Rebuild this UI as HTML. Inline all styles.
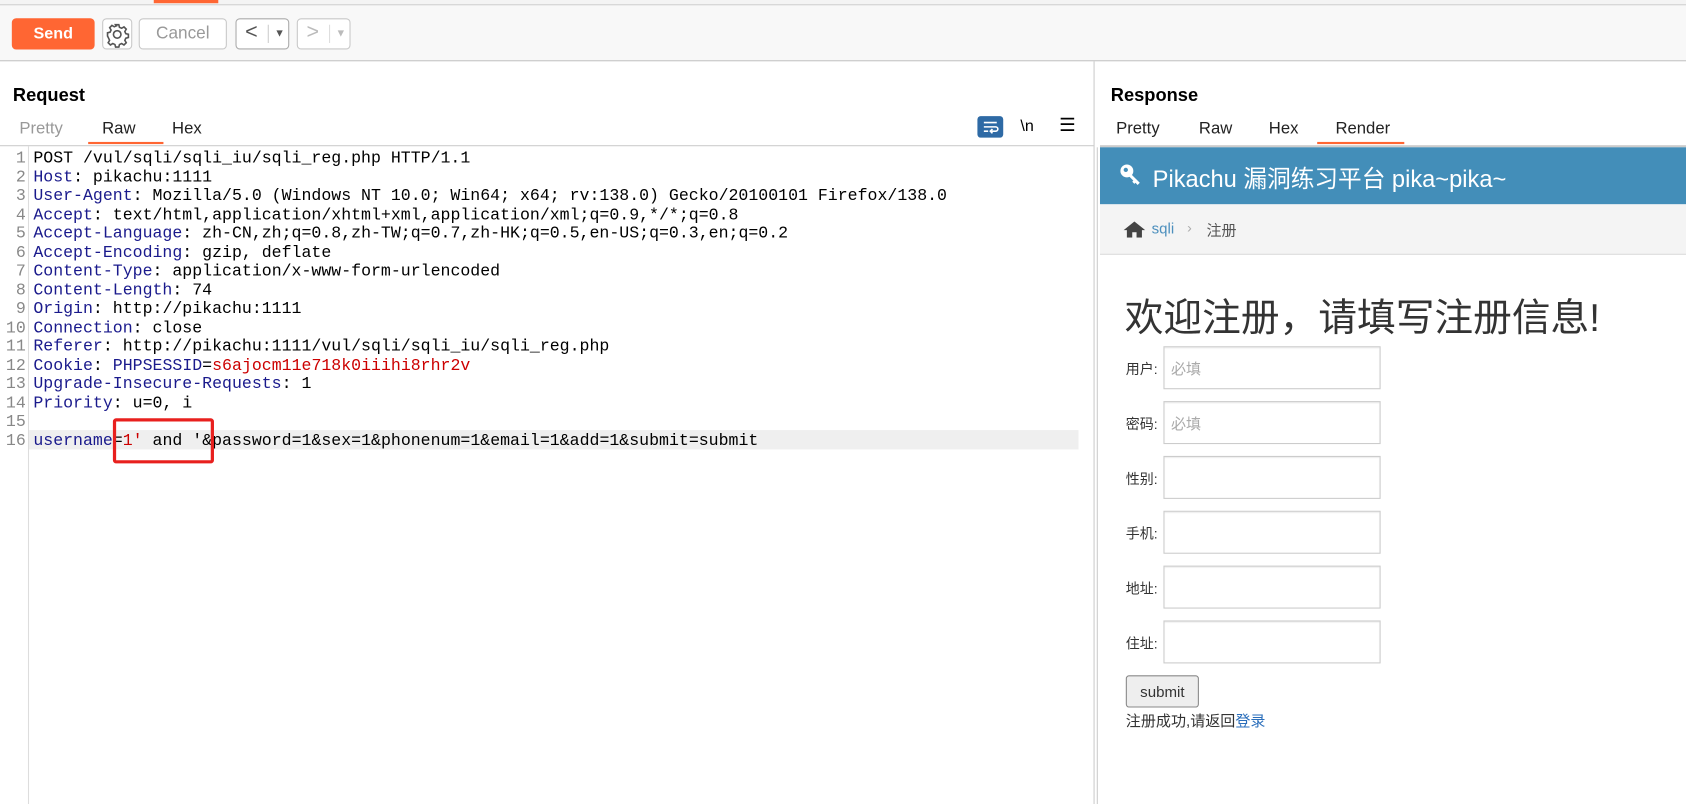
<!DOCTYPE html>
<html><head><meta charset="utf-8"><style>
*{margin:0;padding:0;box-sizing:border-box}
body{width:1686px;height:804px;overflow:hidden;background:#fff;font-family:"Liberation Sans","Noto Sans CJK SC",sans-serif;position:relative}
#w{position:absolute;left:0;top:0;width:1568px;height:748px;transform:scale(1.07526);transform-origin:0 0}
.a{position:absolute}
.btn{position:absolute;border:1px solid #c8c8c8;border-radius:4px;background:#fff;color:#999;font-size:16px;text-align:center}
.mono{font-family:"Liberation Mono","Noto Sans CJK SC",monospace;font-size:15.4px;color:#000;white-space:pre}
.ln{position:absolute;left:0;width:24px;text-align:right;font-family:"Liberation Mono",monospace;font-size:15.4px;color:#888}
.k{color:#1a1a8c}.r{color:#c00}
.tab{position:absolute;font-size:15.5px;color:#222}
.lab{position:absolute;left:1047px;font-size:13px;color:#333}
.inp{position:absolute;left:1082px;width:202px;height:40px;border:1px solid #ccc;box-shadow:inset 0 1px 1px rgba(0,0,0,.08);font-size:14px;color:#aaa;padding:10px 6px}
</style></head><body><div id="w">
<div class="a" style="left:0;top:0;width:1568px;height:5px;background:#f4f4f4;border-bottom:1px solid #ccc"></div>
<div class="a" style="left:143px;top:0;width:60px;height:3px;background:#ff6633"></div>
<div class="a" style="left:0;top:5px;width:1568px;height:52px;background:#f8f8f8;border-bottom:1px solid #c4c4c4"></div>
<div class="a" style="left:11px;top:17px;width:77px;height:29px;background:#ff6633;border-radius:4px;color:#fff;font-weight:bold;font-size:15px;text-align:center;line-height:29px">Send</div>
<div class="btn" style="left:95px;top:17px;width:28px;height:29px">
<svg width="26" height="26" viewBox="0 0 26 26" style="position:absolute;left:0;top:1px"><g fill="none" stroke="#555" stroke-width="1.5"><circle cx="13" cy="13" r="3.5"/><path d="M11.5 4h3l.6 2.4 2 .9 2.2-1.3 2.1 2.1-1.3 2.2.9 2 2.4.6v3l-2.4.6-.9 2 1.3 2.2-2.1 2.1-2.2-1.3-2 .9-.6 2.4h-3l-.6-2.4-2-.9-2.2 1.3-2.1-2.1 1.3-2.2-.9-2L4 14.5v-3l2.4-.6.9-2-1.3-2.2 2.1-2.1 2.2 1.3 2-.9z"/></g></svg></div>
<div class="btn" style="left:129px;top:17px;width:82px;height:29px;line-height:27px">Cancel</div>
<div class="btn" style="left:219px;top:17px;width:50px;height:29px;border-color:#aaa;color:#555;font-size:20px;line-height:25px;text-align:left;padding-left:8px">&lt;<span style="position:absolute;left:29px;top:5px;width:1px;height:17px;background:#ccc"></span><span style="position:absolute;left:35px;top:1px;font-size:10px">▼</span></div>
<div class="btn" style="left:276px;top:17px;width:50px;height:29px;color:#bbb;font-size:20px;line-height:25px;text-align:left;padding-left:8px">&gt;<span style="position:absolute;left:29px;top:5px;width:1px;height:17px;background:#ddd"></span><span style="position:absolute;left:35px;top:1px;font-size:10px">▼</span></div>
<div class="a" style="left:12px;top:79px;font-weight:bold;font-size:17px;color:#000">Request</div>
<div class="tab" style="left:18px;top:111px;color:#999">Pretty</div>
<div class="tab" style="left:95px;top:111px">Raw</div>
<div class="tab" style="left:160px;top:111px">Hex</div>
<div class="a" style="left:82px;top:132px;width:70px;height:2px;background:#ff6633"></div>
<div class="a" style="left:909px;top:108px;width:24px;height:20px;background:#2e6aa5;border-radius:3px"><svg width="24" height="20"><g fill="none" stroke="#fff" stroke-width="1.5"><path d="M6 6h12M6 10h11a2 2 0 010 4h-4M6 14h4M14 12l-2 2 2 2"/></g></svg></div>
<div class="a" style="left:949px;top:109px;font-size:15px;color:#000">\n</div>
<div class="a" style="left:985px;top:107px;font-size:17px;color:#000">☰</div>
<div class="a" style="left:0;top:135px;width:1017px;height:1px;background:#ccc"></div>
<div class="a" style="left:26px;top:136px;width:1px;height:612px;background:#ddd"></div>
<div class="a" style="left:27px;top:400px;width:976px;height:18px;background:#efefef"></div>
<div class="a" style="left:0;top:138px;width:1010px">
<div class="ln" style="top:0">1</div><div class="a mono" style="left:31px;top:0">POST /vul/sqli/sqli_iu/sqli_reg.php HTTP/1.1</div>
<div class="ln" style="top:17.5px">2</div><div class="a mono" style="left:31px;top:17.5px"><span class="k">Host</span>: pikachu:1111</div>
<div class="ln" style="top:35px">3</div><div class="a mono" style="left:31px;top:35px"><span class="k">User-Agent</span>: Mozilla/5.0 (Windows NT 10.0; Win64; x64; rv:138.0) Gecko/20100101 Firefox/138.0</div>
<div class="ln" style="top:52.5px">4</div><div class="a mono" style="left:31px;top:52.5px"><span class="k">Accept</span>: text/html,application/xhtml+xml,application/xml;q=0.9,*/*;q=0.8</div>
<div class="ln" style="top:70px">5</div><div class="a mono" style="left:31px;top:70px"><span class="k">Accept-Language</span>: zh-CN,zh;q=0.8,zh-TW;q=0.7,zh-HK;q=0.5,en-US;q=0.3,en;q=0.2</div>
<div class="ln" style="top:87.5px">6</div><div class="a mono" style="left:31px;top:87.5px"><span class="k">Accept-Encoding</span>: gzip, deflate</div>
<div class="ln" style="top:105px">7</div><div class="a mono" style="left:31px;top:105px"><span class="k">Content-Type</span>: application/x-www-form-urlencoded</div>
<div class="ln" style="top:122.5px">8</div><div class="a mono" style="left:31px;top:122.5px"><span class="k">Content-Length</span>: 74</div>
<div class="ln" style="top:140px">9</div><div class="a mono" style="left:31px;top:140px"><span class="k">Origin</span>: http://pikachu:1111</div>
<div class="ln" style="top:157.5px">10</div><div class="a mono" style="left:31px;top:157.5px"><span class="k">Connection</span>: close</div>
<div class="ln" style="top:175px">11</div><div class="a mono" style="left:31px;top:175px"><span class="k">Referer</span>: http://pikachu:1111/vul/sqli/sqli_iu/sqli_reg.php</div>
<div class="ln" style="top:192.5px">12</div><div class="a mono" style="left:31px;top:192.5px"><span class="k">Cookie</span>: <span class="k">PHPSESSID</span>=<span class="r">s6ajocm11e718k0iiihi8rhr2v</span></div>
<div class="ln" style="top:210px">13</div><div class="a mono" style="left:31px;top:210px"><span class="k">Upgrade-Insecure-Requests</span>: 1</div>
<div class="ln" style="top:227.5px">14</div><div class="a mono" style="left:31px;top:227.5px"><span class="k">Priority</span>: u=0, i</div>
<div class="ln" style="top:245px">15</div>
<div class="ln" style="top:262.5px">16</div><div class="a mono" style="left:31px;top:262.5px"><span class="k">username</span>=<span class="r">1'</span> and '<span>&amp;password=1&amp;sex=1&amp;phonenum=1&amp;email=1&amp;add=1&amp;submit=submit</span></div>
</div>
<div class="a" style="left:105px;top:389px;width:94px;height:42px;border:3px solid #e8201e;border-radius:3px"></div>
<div class="a" style="left:1017px;top:57px;width:1px;height:691px;background:#ccc"></div>
<div class="a" style="left:1020px;top:137px;width:1px;height:611px;background:#ccc"></div>
<div class="a" style="left:1033px;top:79px;font-weight:bold;font-size:17px;color:#000">Response</div>
<div class="tab" style="left:1038px;top:111px">Pretty</div>
<div class="tab" style="left:1115px;top:111px">Raw</div>
<div class="tab" style="left:1180px;top:111px">Hex</div>
<div class="tab" style="left:1242px;top:111px">Render</div>
<div class="a" style="left:1225px;top:132px;width:81px;height:2px;background:#ff6633"></div>
<div class="a" style="left:1023px;top:135px;width:545px;height:2px;background:#ccc"></div>
<div class="a" style="left:1023px;top:137px;width:545px;height:53px;background:#438eb9"></div>
<svg class="a" style="left:1041px;top:152px" width="22" height="22" viewBox="0 0 22 22"><g fill="#fff"><circle cx="7" cy="7" r="6"/><path d="M10 9l9 9-2 2-2-2-1 1-2-2 1-1-5-5z"/></g><circle cx="6" cy="6" r="2" fill="#438eb9"/></svg>
<div class="a" style="left:1072px;top:149px;font-size:22px;color:#fff">Pikachu 漏洞练习平台 pika~pika~</div>
<div class="a" style="left:1023px;top:190px;width:545px;height:47px;background:#f4f4f4;border-bottom:1px solid #ddd"></div>
<svg class="a" style="left:1044px;top:205px" width="22" height="16" viewBox="0 0 22 16"><path d="M11 1L1 9h3v7h5v-5h4v5h5V9h3z" fill="#444"/></svg>
<div class="a" style="left:1071px;top:204px;font-size:14px;color:#4c8fbd">sqli</div>
<div class="a" style="left:1104px;top:204px;font-size:13px;color:#aaa">›</div>
<div class="a" style="left:1122px;top:204px;font-size:14px;color:#555">注册</div>
<div class="a" style="left:1046px;top:267px;font-size:36px;color:#333">欢迎注册，请填写注册信息!</div>
<div class="lab" style="top:333px">用户:</div><div class="inp" style="top:322px">必填</div>
<div class="lab" style="top:384px">密码:</div><div class="inp" style="top:373px">必填</div>
<div class="lab" style="top:435px">性别:</div><div class="inp" style="top:424px"></div>
<div class="lab" style="top:486px">手机:</div><div class="inp" style="top:475px"></div>
<div class="lab" style="top:537px">地址:</div><div class="inp" style="top:526px"></div>
<div class="lab" style="top:588px">住址:</div><div class="inp" style="top:577px"></div>
<div class="a" style="left:1047px;top:628px;width:68px;height:30px;border:1px solid #888;border-radius:3px;background:#eee;font-size:14px;color:#333;text-align:center;line-height:28px">submit</div>
<div class="a" style="left:1047px;top:660px;font-size:14px;color:#333">注册成功,请返回<span style="color:#2a6ebb">登录</span></div>
</div></body></html>
